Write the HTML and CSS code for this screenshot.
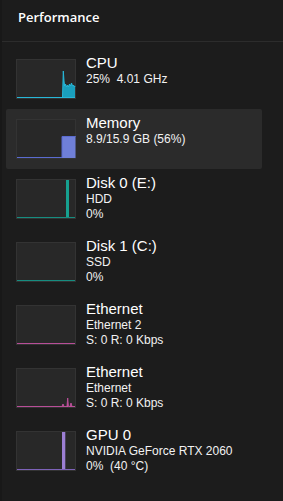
FILE: index.html
```html
<!DOCTYPE html>
<html>
<head>
<meta charset="utf-8">
<link rel="stylesheet" href="styles.css">
</head>
<body>
<div class="app">
  <header class="header">Performance</header>
  <ul class="list">
    <li class="row">
      <svg class="graph" viewBox="0 0 60 40" width="60" height="40">
        <rect x="0.5" y="0.5" width="59" height="39" class="frame"/>
        <polygon class="cpu-fill" points="46.5,39 47.3,12 48,22 48.6,27 49.5,25 50.5,28 51.5,26 52.5,28 53.5,25 54.5,27 55.5,24 56.5,27 57.5,26 58.5,28 59,27 59,39"/>
        <polyline class="cpu-line" points="46.5,38.5 47.3,12 48,22 48.6,27 49.5,25 50.5,28 51.5,26 52.5,28 53.5,25 54.5,27 55.5,24 56.5,27 57.5,26 58.5,28 59,27"/>
        <line class="cpu-line" x1="1" y1="38.5" x2="59" y2="38.5"/>
      </svg>
      <div class="info">
        <div class="title">CPU</div>
        <div class="sub">25%&nbsp; 4.01 GHz</div>
      </div>
    </li>
    <li class="row selected">
      <svg class="graph" viewBox="0 0 60 40" width="60" height="40">
        <rect x="0.5" y="0.5" width="59" height="39" class="frame"/>
        <rect class="mem-fill" x="46" y="17" width="13.5" height="22"/>
        <polyline class="mem-line" points="1,38.5 46,38.5 46,17.5 59.5,17.5"/>
      </svg>
      <div class="info">
        <div class="title">Memory</div>
        <div class="sub">8.9/15.9 GB (56%)</div>
      </div>
    </li>
    <li class="row">
      <svg class="graph" viewBox="0 0 60 40" width="60" height="40">
        <rect x="0.5" y="0.5" width="59" height="39" class="frame"/>
        <rect class="disk-fill" x="50" y="1" width="3" height="38"/>
        <line class="disk-line" x1="1" y1="38.5" x2="59" y2="38.5"/>
      </svg>
      <div class="info">
        <div class="title">Disk 0 (E:)</div>
        <div class="sub">HDD</div>
        <div class="sub">0%</div>
      </div>
    </li>
    <li class="row">
      <svg class="graph" viewBox="0 0 60 40" width="60" height="40">
        <rect x="0.5" y="0.5" width="59" height="39" class="frame"/>
        <line class="disk-line" x1="1" y1="38.5" x2="59" y2="38.5"/>
      </svg>
      <div class="info">
        <div class="title">Disk 1 (C:)</div>
        <div class="sub">SSD</div>
        <div class="sub">0%</div>
      </div>
    </li>
    <li class="row">
      <svg class="graph" viewBox="0 0 60 40" width="60" height="40">
        <rect x="0.5" y="0.5" width="59" height="39" class="frame"/>
        <line class="eth-line" x1="1" y1="38.5" x2="59" y2="38.5"/>
      </svg>
      <div class="info">
        <div class="title">Ethernet</div>
        <div class="sub">Ethernet 2</div>
        <div class="sub">S: 0 R: 0 Kbps</div>
      </div>
    </li>
    <li class="row">
      <svg class="graph" viewBox="0 0 60 40" width="60" height="40">
        <rect x="0.5" y="0.5" width="59" height="39" class="frame"/>
        <polygon class="eth-fill" points="46,39 47,36 48,39 51,39 51.7,30 52.4,39 54,39 55,35 56,39"/>
        <polyline class="eth-line" points="1,38.5 46,38.5 47,36 48,38.5 51,38.5 51.7,30 52.4,38.5 54,38.5 55,35 56,38.5 59,38.5"/>
      </svg>
      <div class="info">
        <div class="title">Ethernet</div>
        <div class="sub">Ethernet</div>
        <div class="sub">S: 0 R: 0 Kbps</div>
      </div>
    </li>
    <li class="row">
      <svg class="graph" viewBox="0 0 60 40" width="60" height="40">
        <rect x="0.5" y="0.5" width="59" height="39" class="frame"/>
        <rect class="gpu-fill" x="46" y="1" width="3.3" height="38"/>
        <line class="gpu-line" x1="1" y1="38.5" x2="59" y2="38.5"/>
      </svg>
      <div class="info">
        <div class="title">GPU 0</div>
        <div class="sub">NVIDIA GeForce RTX 2060</div>
        <div class="sub">0%&nbsp; (40 °C)</div>
      </div>
    </li>
  </ul>
</div>
</body>
</html>
```

FILE: styles.css
```css
html, body {
  margin: 0;
  padding: 0;
  background: #1c1c1c;
  height: 100%;
}

.app {
  border-left: 2px solid #181818;
  min-height: 100%;
  box-sizing: border-box;
}

.header {
  height: 42px;
  box-sizing: border-box;
  padding: 8px 0 0 16px;
  border-bottom: 1px solid #2c2c2c;
  font-family: "Open Sans", "Noto Sans", sans-serif;
  font-weight: 600;
  font-size: 13px;
  color: #ffffff;
}

.list {
  list-style: none;
  margin: 7px 0 0 4px;
  padding: 0;
  width: 256px;
}

.row {
  display: flex;
  align-items: flex-start;
  gap: 10px;
  padding: 5px 0 5px 10px;
  border-radius: 2px;
}

.row.selected {
  background: #2b2b2b;
}

.graph {
  display: block;
  flex: none;
  margin: 5px 0;
}

.frame {
  fill: #282828;
  stroke: #333333;
  stroke-width: 1;
}

.info {
  padding-bottom: 5px;
  font-family: "Liberation Sans", Arial, sans-serif;
  color: #ffffff;
}

.title {
  font-size: 15px;
  line-height: 18px;
}

.sub {
  font-size: 12px;
  line-height: 15px;
  color: #f2f2f2;
}

.cpu-fill { fill: #1a9fbd; }
.cpu-line { fill: none; stroke: #27b7d8; stroke-width: 1; }

.mem-fill { fill: #6f7fd8; }
.mem-line { fill: none; stroke: #5a6bd0; stroke-width: 1; }

.disk-fill { fill: #16a08f; }
.disk-line { stroke: #168d80; stroke-width: 1; }

.eth-fill { fill: #d45ca8; }
.eth-line { fill: none; stroke: #b84e98; stroke-width: 1; }

.gpu-fill { fill: #9c7fd4; }
.gpu-line { stroke: #7d62b8; stroke-width: 1; }
```
